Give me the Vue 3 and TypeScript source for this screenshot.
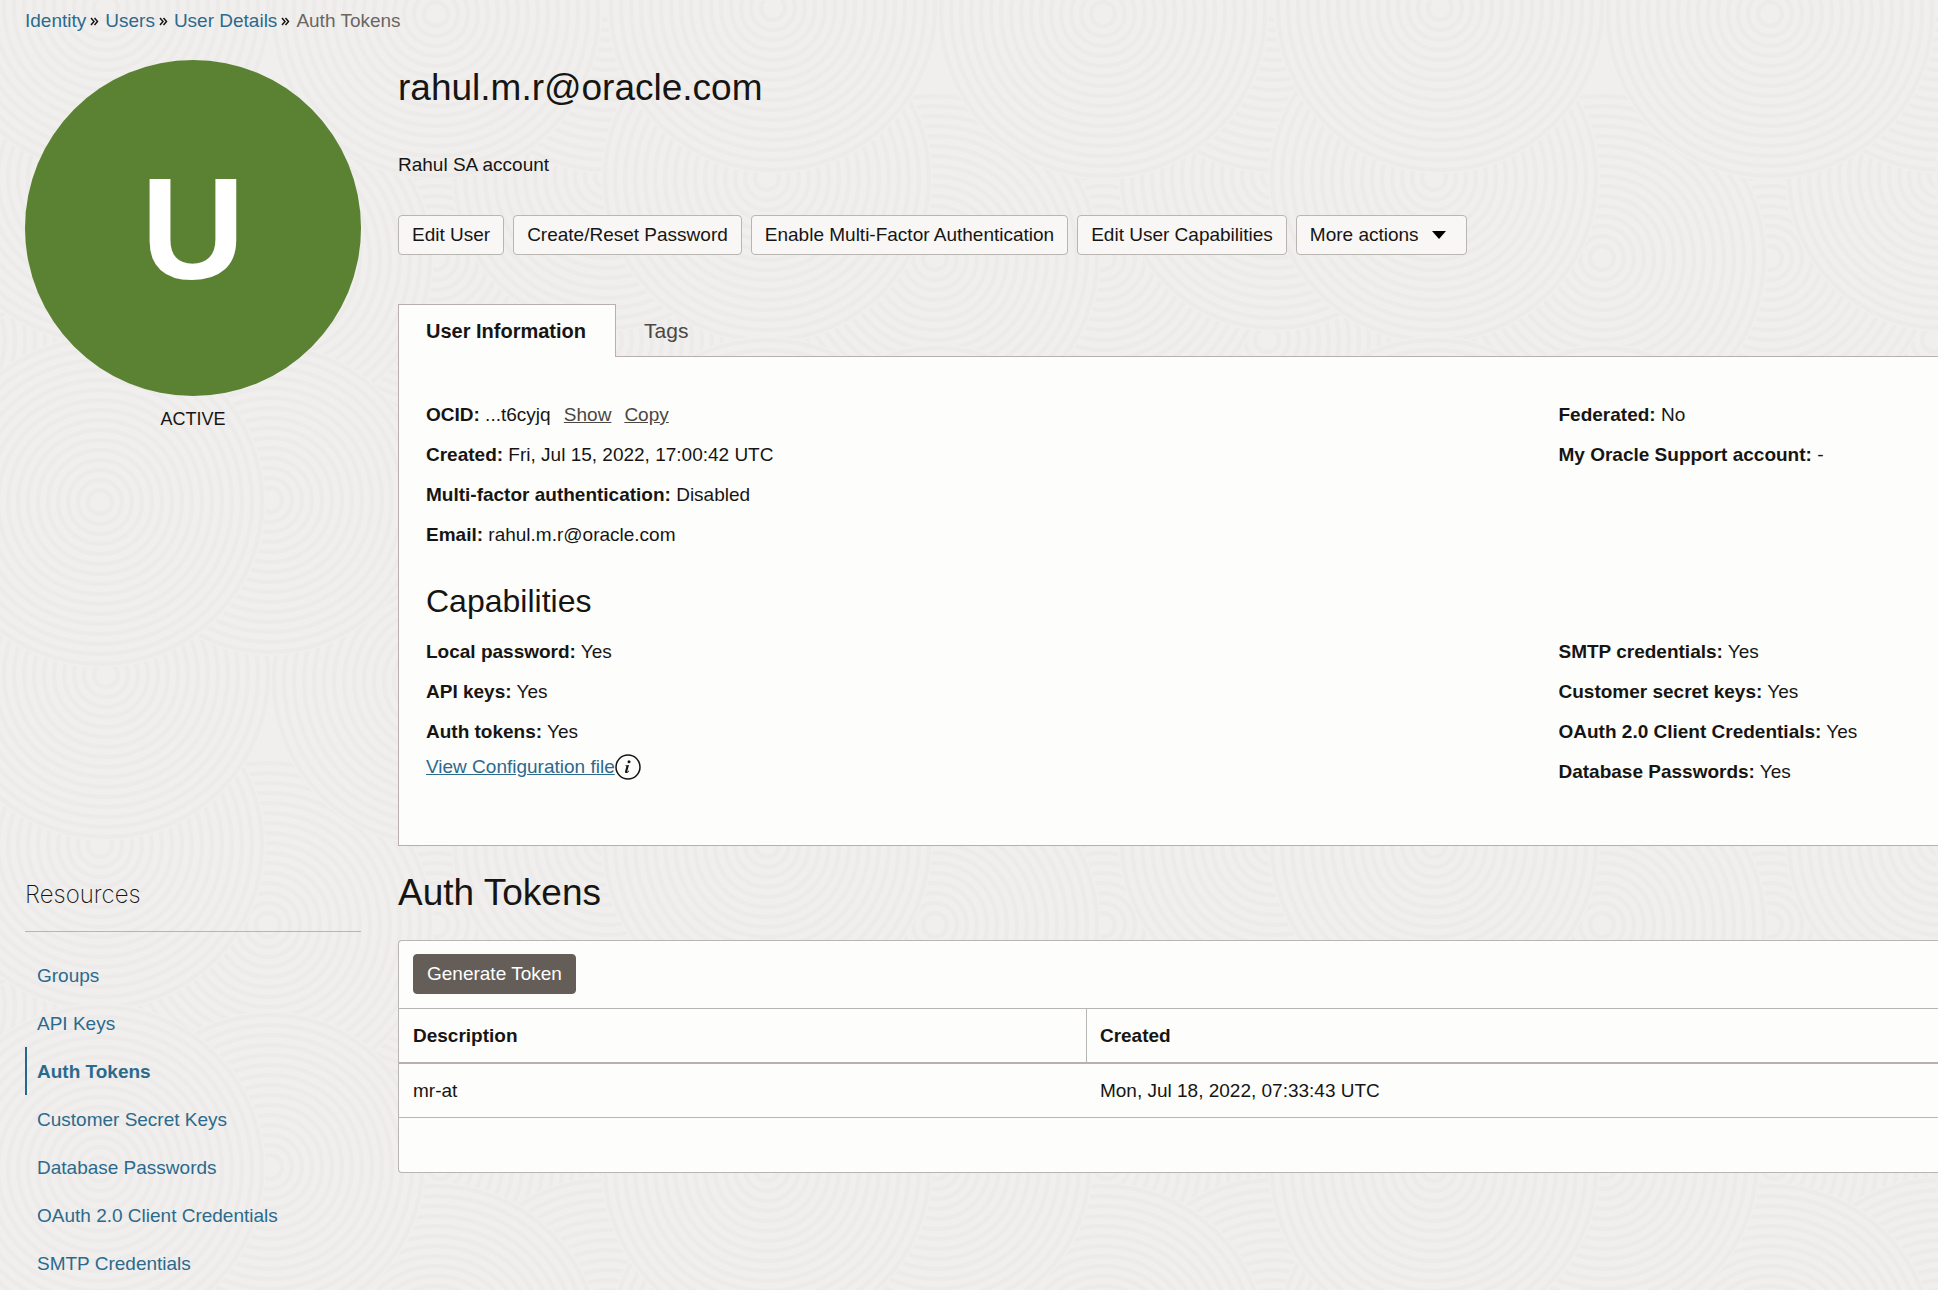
<script setup lang="ts">
interface Field {
  label: string
  value: string
}

interface Swirl {
  x: number
  y: number
  r: number
}

const breadcrumbs: string[] = ['Identity', 'Users', 'User Details']
const actions: string[] = [
  'Edit User',
  'Create/Reset Password',
  'Enable Multi-Factor Authentication',
  'Edit User Capabilities',
]

const userFields: Field[] = [
  { label: 'Created', value: 'Fri, Jul 15, 2022, 17:00:42 UTC' },
  { label: 'Multi-factor authentication', value: 'Disabled' },
  { label: 'Email', value: 'rahul.m.r@oracle.com' },
]
const accountFields: Field[] = [
  { label: 'Federated', value: 'No' },
  { label: 'My Oracle Support account', value: '-' },
]
const keyCapabilities: Field[] = [
  { label: 'Local password', value: 'Yes' },
  { label: 'API keys', value: 'Yes' },
  { label: 'Auth tokens', value: 'Yes' },
]
const credentialCapabilities: Field[] = [
  { label: 'SMTP credentials', value: 'Yes' },
  { label: 'Customer secret keys', value: 'Yes' },
  { label: 'OAuth 2.0 Client Credentials', value: 'Yes' },
  { label: 'Database Passwords', value: 'Yes' },
]

const currentResource = 'Auth Tokens'
const resources: string[] = [
  'Groups',
  'API Keys',
  'Auth Tokens',
  'Customer Secret Keys',
  'Database Passwords',
  'OAuth 2.0 Client Credentials',
  'SMTP Credentials',
]

const tokens = [{ description: 'mr-at', created: 'Mon, Jul 18, 2022, 07:33:43 UTC' }]

// Background texture: overlapping ripples, later ones cover earlier ones.
const tile = 667
const ringStep = 10
const swirls: Swirl[] = [
  { x: 600, y: 500, r: 166 },
  { x: 600, y: 340, r: 166 },
  { x: 440, y: 500, r: 166 },
  { x: 436, y: 258, r: 166 },
  { x: 268, y: 258, r: 166 },
  { x: 607, y: 176, r: 156 },
  { x: 607, y: 8, r: 166 },
  { x: 100, y: 178, r: 166 },
  { x: 106, y: 8, r: 166 },
  { x: 436, y: 14, r: 166 },
  { x: 270, y: 500, r: 156 },
  { x: 100, y: 502, r: 166 },
]
const ripples: Swirl[] = swirls.flatMap((s) =>
  [-tile, 0, tile].flatMap((dy) =>
    [-tile, 0, tile]
      .map((dx) => ({ x: s.x + dx, y: s.y + dy, r: s.r }))
      .filter((c) => c.x + c.r > 0 && c.x - c.r < tile && c.y + c.r > 0 && c.y - c.r < tile),
  ),
)
const rings = (r: number): number[] =>
  Array.from({ length: Math.floor(r / ringStep) }, (_, i) => r - 4 - i * ringStep)
</script>

<template>
  <div class="page">
    <svg class="texture" aria-hidden="true">
      <defs>
        <pattern id="ripples" :width="tile" :height="tile" patternUnits="userSpaceOnUse">
          <g v-for="(s, i) in ripples" :key="i">
            <circle :cx="s.x" :cy="s.y" :r="s.r" fill="#f0efed" />
            <circle
              v-for="r in rings(s.r)"
              :key="r"
              :cx="s.x"
              :cy="s.y"
              :r="r"
              fill="none"
              stroke="#ecebe9"
              stroke-width="4"
            />
          </g>
        </pattern>
      </defs>
      <rect width="100%" height="100%" fill="url(#ripples)" />
    </svg>

    <nav class="breadcrumbs" aria-label="Breadcrumb">
      <template v-for="crumb in breadcrumbs" :key="crumb">
        <a href="#">{{ crumb }}</a>
        <svg class="crumb-sep" viewBox="0 0 9 9" aria-hidden="true">
          <path d="M1 1l3 3.5L1 8M4.500 1l3 3.5-3 3.5" />
        </svg>
      </template>
      <span class="crumb-current">Auth Tokens</span>
    </nav>

    <div class="layout">
      <aside class="status">
        <div class="avatar">U</div>
        <p class="state">ACTIVE</p>
      </aside>

      <main class="details">
        <h1>rahul.m.r@oracle.com</h1>
        <p class="description">Rahul SA account</p>

        <div class="actions">
          <button v-for="action in actions" :key="action" type="button" class="btn">{{ action }}</button>
          <button type="button" class="btn btn-menu" aria-haspopup="menu">
            More actions
            <svg viewBox="0 0 14 8" aria-hidden="true"><path d="M0 0h14L7 8z" /></svg>
          </button>
        </div>

        <div class="tabs" role="tablist">
          <button type="button" role="tab" class="tab active" aria-selected="true">User Information</button>
          <button type="button" role="tab" class="tab" aria-selected="false">Tags</button>
        </div>

        <section class="panel" role="tabpanel">
          <div class="columns">
            <div>
              <p class="field">
                <b>OCID:</b> ...t6cyjq <a class="quiet" href="#">Show</a><a class="quiet" href="#">Copy</a>
              </p>
              <p v-for="f in userFields" :key="f.label" class="field"><b>{{ f.label }}:</b> {{ f.value }}</p>
            </div>
            <div>
              <p v-for="f in accountFields" :key="f.label" class="field"><b>{{ f.label }}:</b> {{ f.value }}</p>
            </div>
          </div>

          <h2>Capabilities</h2>
          <div class="columns">
            <div>
              <p v-for="f in keyCapabilities" :key="f.label" class="field"><b>{{ f.label }}:</b> {{ f.value }}</p>
              <div class="config">
                <a href="#">View Configuration file</a>
                <svg viewBox="0 0 26 26" aria-hidden="true">
                  <circle cx="13" cy="13" r="12" fill="none" stroke="#161513" stroke-width="1.500" />
                  <circle cx="14" cy="7.800" r="1.500" />
                  <path d="M10.200 11.600l3.800-.6-1.700 6.300c-.1.500.1.600.4.400l1-1.100.5.400c-1 1.600-2.100 2.200-3.100 2.100-1-.1-1.300-.8-1-1.900l1.200-4.400c.1-.5 0-.7-.5-.7h-.7z" />
                </svg>
              </div>
            </div>
            <div>
              <p v-for="f in credentialCapabilities" :key="f.label" class="field">
                <b>{{ f.label }}:</b> {{ f.value }}
              </p>
            </div>
          </div>
        </section>
      </main>

      <aside class="resources">
        <h3>Resources</h3>
        <nav aria-label="Resources">
          <a v-for="r in resources" :key="r" href="#" :class="{ current: r === currentResource }">{{ r }}</a>
        </nav>
      </aside>

      <section class="tokens">
        <h2 class="tokens-title">Auth Tokens</h2>
        <div class="card">
          <div class="toolbar">
            <button type="button" class="btn btn-primary">Generate Token</button>
          </div>
          <table>
            <colgroup>
              <col class="col-description" />
              <col />
            </colgroup>
            <thead>
              <tr>
                <th scope="col">Description</th>
                <th scope="col">Created</th>
              </tr>
            </thead>
            <tbody>
              <tr v-for="t in tokens" :key="t.description">
                <td>{{ t.description }}</td>
                <td>{{ t.created }}</td>
              </tr>
            </tbody>
          </table>
          <div class="card-footer"></div>
        </div>
      </section>
    </div>
  </div>
</template>

<style>
body {
  margin: 0;
  background: #f0efed;
}
</style>

<style scoped>
.page {
  position: relative;
  box-sizing: border-box;
  min-height: 100vh;
  padding: 9px 0 0 25px;
  overflow: hidden;
  font-family: "Liberation Sans", Arial, sans-serif;
  font-size: 19px;
  line-height: 24px;
  color: #161513;
}

.texture {
  position: absolute;
  inset: 0;
  z-index: -1;
  width: 100%;
  height: 100%;
}

h1,
h2,
h3,
p {
  margin: 0;
  font-weight: 400;
}

a {
  color: #2b6a8d;
}

.breadcrumbs {
  display: flex;
  align-items: center;
  height: 24px;
}

.breadcrumbs a {
  text-decoration: none;
}

.crumb-sep {
  width: 9px;
  height: 9px;
  margin: 0 6px 0 4px;
  fill: none;
  stroke: #161513;
  stroke-width: 1.5;
}

.crumb-current {
  color: #6b6661;
}

.layout {
  display: grid;
  grid-template-columns: 336px minmax(0, 1fr);
  column-gap: 37px;
  margin-top: 27px;
}

.avatar {
  display: flex;
  align-items: center;
  justify-content: center;
  box-sizing: border-box;
  width: 336px;
  height: 336px;
  padding-top: 3px;
  border-radius: 50%;
  background: #5b8133;
  color: #fff;
  font-size: 144px;
  font-weight: 700;
  line-height: 160px;
}

.state {
  margin-top: 11px;
  font-size: 18px;
  text-align: center;
}

h1 {
  margin-top: 6px;
  font-size: 37px;
  line-height: 44px;
}

.description {
  margin-top: 43px;
}

.actions {
  display: flex;
  gap: 9px;
  margin-top: 38px;
}

.btn {
  box-sizing: border-box;
  height: 40px;
  padding: 0 13px;
  border: 1px solid #b9b5b1;
  border-radius: 4px;
  background: #f8f7f6;
  color: #161513;
  font: inherit;
  white-space: nowrap;
}

.btn-menu {
  display: flex;
  align-items: center;
  gap: 13px;
  padding-right: 20px;
}

.btn-menu svg {
  width: 14px;
  height: 8px;
}

.btn-primary {
  border-color: #645d58;
  background: #645d58;
  color: #fff;
}

.tabs {
  display: flex;
  margin-top: 49px;
}

.tab {
  box-sizing: border-box;
  height: 53px;
  padding: 0 29px 0 27px;
  border: 1px solid transparent;
  border-bottom: 0;
  background: transparent;
  color: #4a4744;
  font: inherit;
  font-size: 21px;
}

.tab.active {
  z-index: 1;
  border-color: #b9b0ad;
  background: #fdfdfb;
  color: #161513;
  font-size: 20px;
  font-weight: 700;
}

.panel {
  margin-top: -1px;
  padding: 38px 2px 53px 27px;
  border: 1px solid #b9b0ad;
  border-right: 0;
  background: #fdfdfb;
}

.columns {
  display: grid;
  grid-template-columns: 3fr 1fr;
}

.field {
  line-height: 40px;
}

.quiet {
  margin-left: 8px;
  color: #4a4744;
}

.quiet + .quiet {
  margin-left: 13px;
}

.panel h2 {
  margin: 24px 0 9px;
  font-size: 32px;
  line-height: 44px;
}

.config {
  display: flex;
  align-items: center;
  height: 30px;
}

.config svg {
  width: 26px;
  height: 26px;
  fill: #161513;
}

.resources h3 {
  padding: 33px 0 20px;
  border-bottom: 1px solid #b9b5b1;
  font-family: Inter, "Liberation Sans", sans-serif;
  font-size: 24px;
  font-weight: 200;
  line-height: 32px;
}

.resources nav {
  display: flex;
  flex-direction: column;
  margin-top: 19px;
}

.resources nav a {
  padding: 2px 0 0 10px;
  border-left: 2px solid transparent;
  line-height: 46px;
  text-decoration: none;
}

.resources nav a.current {
  border-color: #27678a;
  font-weight: 700;
}

.tokens-title {
  margin-top: 25px;
  font-size: 37px;
  line-height: 44px;
}

.card {
  margin-top: 25px;
  border: 1px solid #b9b5b1;
  border-right: 0;
  border-radius: 4px 0 0 4px;
  background: #fdfdfb;
}

.toolbar {
  display: flex;
  padding: 13px 14px 14px;
}

table {
  width: 100%;
  border-collapse: separate;
  border-spacing: 0;
  table-layout: fixed;
}

.col-description {
  width: 44.7%;
}

th,
td {
  height: 53px;
  padding: 0 14px;
  border-bottom: 1px solid #b9b5b1;
  text-align: left;
}

th {
  border-top: 1px solid #b9b5b1;
  border-bottom: 2px solid #b9b0ad;
}

th:first-child {
  border-right: 1px solid #b9b5b1;
}

td + td,
th + th {
  padding-left: 13px;
}

.card-footer {
  height: 54px;
}
</style>
